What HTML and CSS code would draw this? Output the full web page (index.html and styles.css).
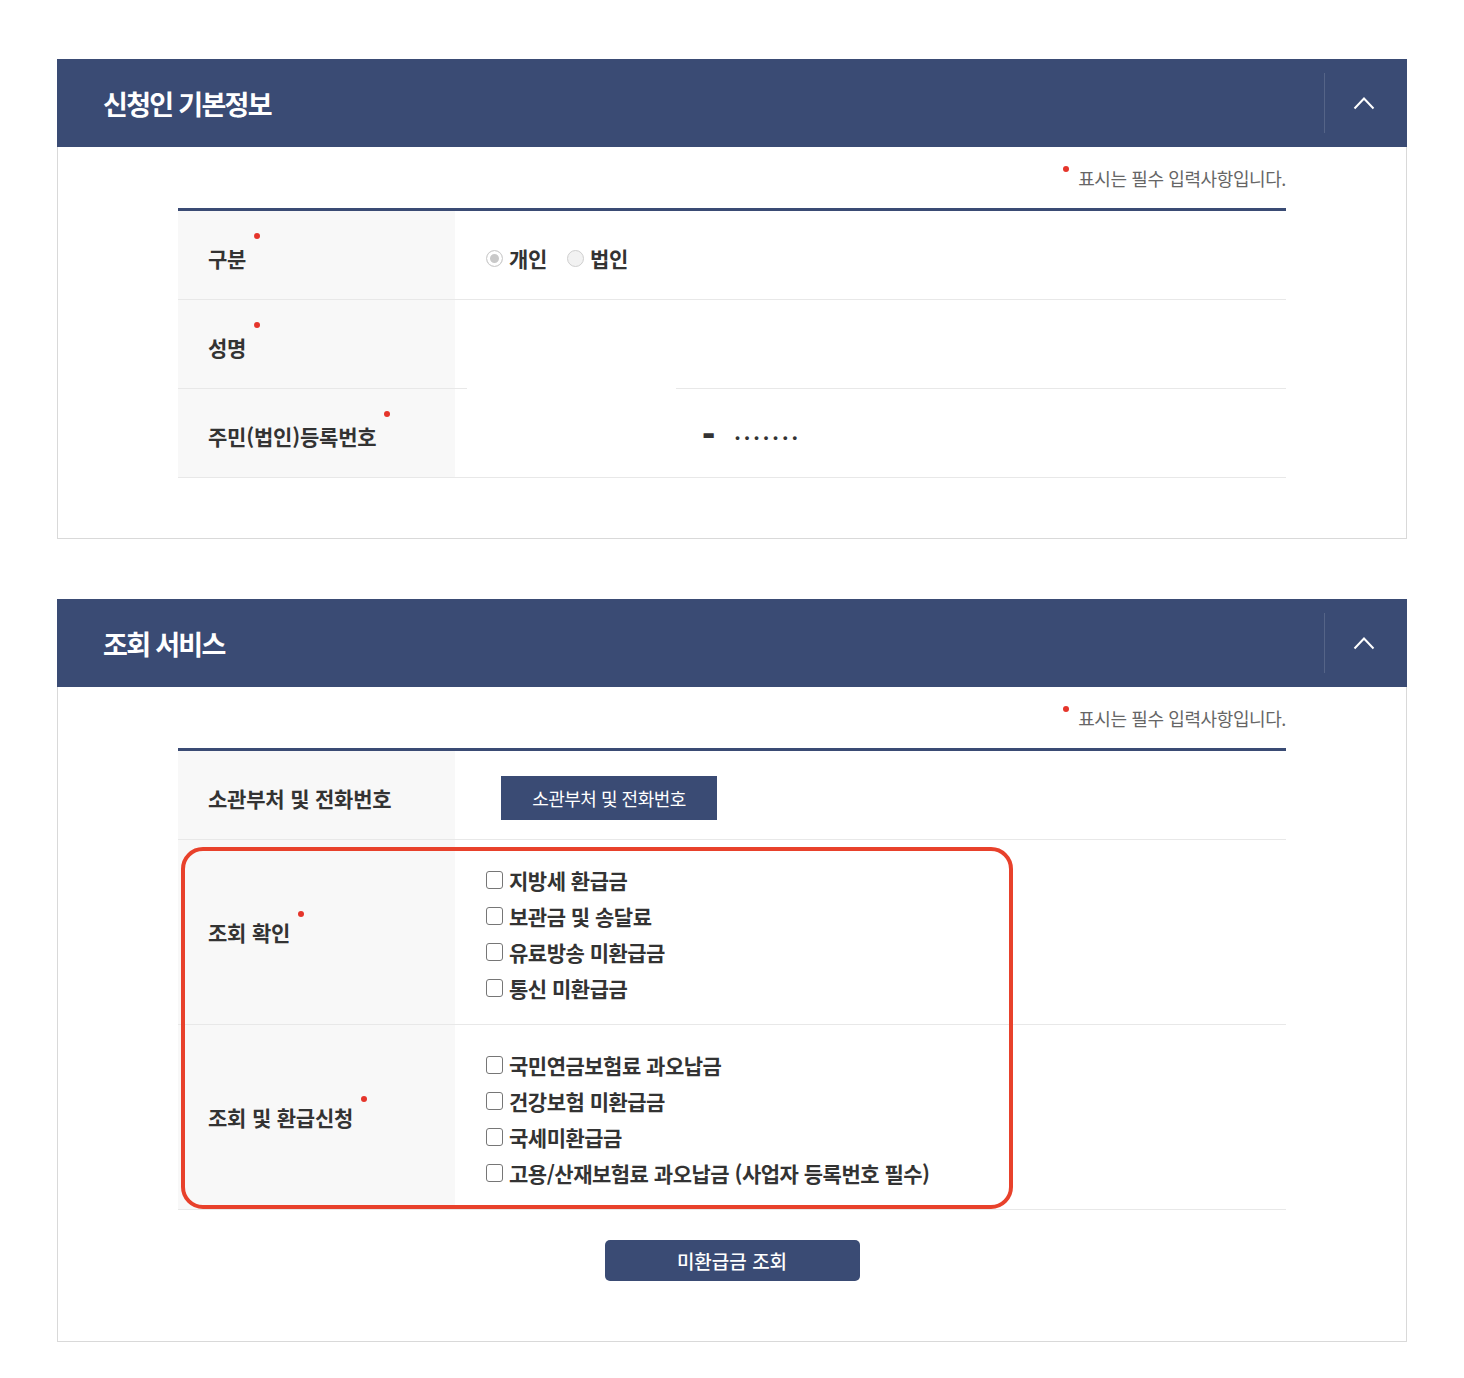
FILE: index.html
```html
<!DOCTYPE html>
<html lang="ko">
<head>
  <meta charset="UTF-8">
  <meta name="viewport" content="width=device-width, initial-scale=1.0">
  <title>미환급금 조회</title>
  <link rel="stylesheet" href="styles.css">
</head>
<body>
  <div class="page">

    <section class="panel">
      <div class="panel-head">
        <h2 class="panel-title">신청인 기본정보</h2>
        <button class="panel-toggle" type="button" aria-label="접기">
          <svg width="22" height="14" viewBox="0 0 22 14"><polyline points="1.5,12.5 11,2.5 20.5,12.5" fill="none" stroke="#fff" stroke-width="2"/></svg>
        </button>
      </div>
      <div class="panel-body">
        <p class="req-note"><span class="req-dot"></span>표시는 필수 입력사항입니다.</p>
        <table class="form-table">
          <tr>
            <th><span class="req">구분</span></th>
            <td>
              <label class="opt"><input type="radio" name="kind" checked disabled>개인</label>
              <label class="opt"><input type="radio" name="kind" disabled>법인</label>
            </td>
          </tr>
          <tr>
            <th><span class="req">성명</span></th>
            <td class="name-cell"></td>
          </tr>
          <tr>
            <th><span class="req">주민(법인)등록번호</span></th>
            <td class="ssn-cell">
              <span class="ssn-front"></span><span class="ssn-dash">-</span><span class="ssn-back">•••••••</span>
            </td>
          </tr>
        </table>
      </div>
    </section>

    <section class="panel">
      <div class="panel-head">
        <h2 class="panel-title">조회 서비스</h2>
        <button class="panel-toggle" type="button" aria-label="접기">
          <svg width="22" height="14" viewBox="0 0 22 14"><polyline points="1.5,12.5 11,2.5 20.5,12.5" fill="none" stroke="#fff" stroke-width="2"/></svg>
        </button>
      </div>
      <div class="panel-body">
        <p class="req-note"><span class="req-dot"></span>표시는 필수 입력사항입니다.</p>
        <div class="table-wrap">
          <table class="form-table">
            <tr>
              <th>소관부처 및 전화번호</th>
              <td><button class="btn-dept" type="button">소관부처 및 전화번호</button></td>
            </tr>
            <tr class="check-row">
              <th><span class="req">조회 확인</span></th>
              <td class="check-cell">
                <label class="chk"><input type="checkbox">지방세 환급금</label>
                <label class="chk"><input type="checkbox">보관금 및 송달료</label>
                <label class="chk"><input type="checkbox">유료방송 미환급금</label>
                <label class="chk"><input type="checkbox">통신 미환급금</label>
              </td>
            </tr>
            <tr class="check-row">
              <th><span class="req">조회 및 환급신청</span></th>
              <td class="check-cell">
                <label class="chk"><input type="checkbox">국민연금보험료 과오납금</label>
                <label class="chk"><input type="checkbox">건강보험 미환급금</label>
                <label class="chk"><input type="checkbox">국세미환급금</label>
                <label class="chk"><input type="checkbox">고용/산재보험료 과오납금 (사업자 등록번호 필수)</label>
              </td>
            </tr>
          </table>
          <div class="highlight"></div>
        </div>
        <button class="btn-search" type="button">미환급금 조회</button>
      </div>
    </section>

  </div>
</body>
</html>
```

FILE: styles.css
```css
body {
  margin: 0;
  background: #fff;
  font-family: "Noto Sans CJK KR", "Noto Sans", sans-serif;
  color: #333;
}

.page {
  padding: 59px 57px 36px;
}

.panel + .panel {
  margin-top: 60px;
}

/* header bar */
.panel-head {
  display: flex;
  align-items: center;
  height: 88px;
  background: #3a4b74;
}

.panel-title {
  flex: 1;
  margin: 0;
  padding-left: 46px;
  color: #fff;
  font-size: 27px;
  font-weight: 700;
  letter-spacing: -1.7px;
}

.panel-toggle {
  display: flex;
  align-items: center;
  justify-content: center;
  width: 78px;
  height: 60px;
  margin-right: 5px;
  padding: 0;
  background: transparent;
  border: none;
  border-left: 1px solid rgba(255, 255, 255, 0.14);
  cursor: pointer;
}

/* body */
.panel-body {
  padding: 0 120px 60px;
  border: 1px solid #d9d9d9;
  border-top: none;
}

.req-note {
  display: flex;
  justify-content: flex-end;
  align-items: center;
  height: 24px;
  margin: 0;
  padding: 19px 0 18px;
  font-size: 18px;
  line-height: 24px;
  letter-spacing: -0.4px;
  color: #666;
}

.req-dot {
  width: 6px;
  height: 6px;
  margin: 0 9px 19px 0;
  border-radius: 50%;
  background: #e5352b;
}

.form-table {
  width: 100%;
  border-collapse: separate;
  border-spacing: 0;
  border-top: 3px solid #3a4b74;
}

.form-table th,
.form-table td {
  height: 82px;
  padding: 6px 0 0;
  border-bottom: 1px solid #e8e8e8;
  font-size: 21px;
  font-weight: 700;
  letter-spacing: -0.2px;
  color: #333;
  text-align: left;
}

.form-table th {
  width: 247px;
  padding-left: 30px;
  background: #f8f8f8;
}

.form-table td {
  padding-left: 31px;
}

.req::after {
  content: "";
  display: inline-block;
  width: 6px;
  height: 6px;
  margin: -10px 0 0 8px;
  border-radius: 50%;
  background: #e5352b;
  vertical-align: text-top;
}

/* radios */
.opt {
  display: inline-flex;
  align-items: center;
  margin-right: 14px;
}

.opt input {
  appearance: none;
  width: 17px;
  height: 17px;
  margin: 0 6px 0 0;
  border: 1px solid #cfcfcf;
  border-radius: 50%;
  background: #f2f2f2;
}

.opt input:checked {
  background: #c9c9c9;
  box-shadow: inset 0 0 0 3px #fff;
}

/* row with the broken line under 성명 */
.form-table td.name-cell {
  border-bottom-color: transparent;
  background: linear-gradient(to right, #e8e8e8 12px, #fff 12px, #fff 221px, #e8e8e8 221px) left bottom / 100% 1px no-repeat;
  background-origin: border-box;
}

.form-table td.ssn-cell {
  padding-left: 12px;
}

.ssn-front {
  display: inline-block;
  width: 209px;
}

.ssn-dash {
  margin-left: 26px;
  font-family: "Liberation Sans", sans-serif;
  font-size: 40px;
  font-weight: 700;
  line-height: 0;
  color: #333;
  vertical-align: -1px;
}

.ssn-back {
  margin-left: 20px;
  font-family: "Liberation Sans", sans-serif;
  font-size: 13px;
  line-height: 0;
  letter-spacing: 5px;
  color: #333;
  vertical-align: 3px;
}

/* checkbox lists */
.check-row th {
  padding-top: 0;
}

.check-row .req::after {
  margin-top: -6px;
}

.form-table td.check-cell {
  height: auto;
  padding-top: 22px;
  padding-bottom: 18px;
}

.chk {
  display: flex;
  align-items: center;
  height: 36px;
  letter-spacing: -0.5px;
}

.chk input {
  appearance: none;
  width: 17px;
  height: 18px;
  margin: 0 6px 0 0;
  border: 1.5px solid #767676;
  border-radius: 3px;
  background: #fff;
}

.btn-dept {
  width: 216px;
  height: 44px;
  margin-left: 15px;
  padding: 0;
  border: none;
  background: #3a4b74;
  color: #fff;
  font-family: inherit;
  font-size: 18px;
  letter-spacing: -0.5px;
  cursor: pointer;
}

.table-wrap {
  position: relative;
}

.highlight {
  position: absolute;
  left: 3px;
  top: 99px;
  width: 824px;
  height: 354px;
  border: 4px solid #e8412b;
  border-radius: 22px;
  pointer-events: none;
}

.btn-search {
  display: block;
  width: 255px;
  height: 41px;
  margin: 30px auto 0;
  padding: 0;
  border: none;
  border-radius: 5px;
  background: #3a4b74;
  color: #fff;
  font-family: inherit;
  font-size: 19px;
  font-weight: 500;
  cursor: pointer;
}
```
